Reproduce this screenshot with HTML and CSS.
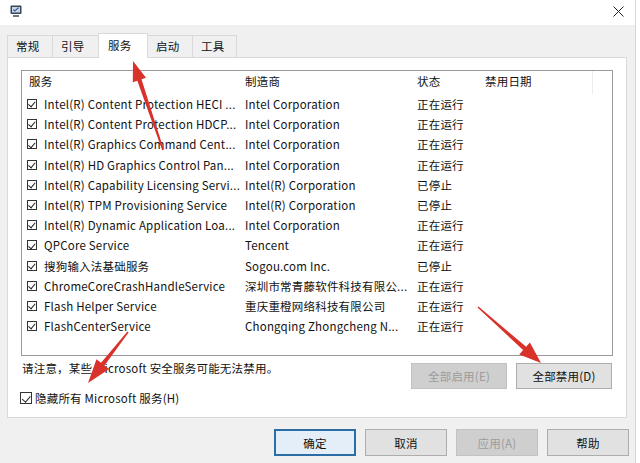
FILE: index.html
```html
<!DOCTYPE html>
<html lang="zh-CN">
<head>
<meta charset="utf-8">
<title>系统配置</title>
<link rel="stylesheet" href="styles.css">
</head>
<body>
<div class="win">
  <div class="titlebar">
    <svg class="appicon" width="12" height="13" viewBox="0 0 12 13">
      <rect x="0.5" y="0.5" width="11" height="8.5" rx="1" fill="#3a4656"/>
      <rect x="2" y="2" width="8" height="5.5" fill="#c9d6e6"/>
      <path d="M3.2 4.6 L4.8 6 L8.6 2.6" stroke="#2d5f9a" stroke-width="1.2" fill="none"/>
      <rect x="3" y="10" width="6" height="2" fill="#6b7786"/>
    </svg>
    <svg class="close" width="11" height="11" viewBox="0 0 11 11">
      <path d="M0.5 0.5 L10.5 10.5 M10.5 0.5 L0.5 10.5" stroke="#222" stroke-width="1"/>
    </svg>
  </div>
  <div class="client">
    <div class="tabs">
      <div class="tab t1">常规</div>
      <div class="tab t2">引导</div>
      <div class="tab t3 active">服务</div>
      <div class="tab t4">启动</div>
      <div class="tab t5">工具</div>
    </div>
    <div class="panel">
      <div class="list">
        <div class="lhead">
          <div class="hc hname">服务</div>
          <div class="hc">制造商</div>
          <div class="hc">状态</div>
          <div class="hc hdate">禁用日期</div>
        </div>
        <div class="row"><span class="cb"></span><span class="c">Intel(R) Content Protection HECI ...</span><span class="c">Intel Corporation</span><span class="c">正在运行</span><span></span></div>
        <div class="row"><span class="cb"></span><span class="c">Intel(R) Content Protection HDCP...</span><span class="c">Intel Corporation</span><span class="c">正在运行</span><span></span></div>
        <div class="row"><span class="cb"></span><span class="c">Intel(R) Graphics Command Cent...</span><span class="c">Intel Corporation</span><span class="c">正在运行</span><span></span></div>
        <div class="row"><span class="cb"></span><span class="c">Intel(R) HD Graphics Control Pan...</span><span class="c">Intel Corporation</span><span class="c">正在运行</span><span></span></div>
        <div class="row"><span class="cb"></span><span class="c">Intel(R) Capability Licensing Servi...</span><span class="c">Intel(R) Corporation</span><span class="c">已停止</span><span></span></div>
        <div class="row"><span class="cb"></span><span class="c">Intel(R) TPM Provisioning Service</span><span class="c">Intel(R) Corporation</span><span class="c">已停止</span><span></span></div>
        <div class="row"><span class="cb"></span><span class="c">Intel(R) Dynamic Application Loa...</span><span class="c">Intel Corporation</span><span class="c">正在运行</span><span></span></div>
        <div class="row"><span class="cb"></span><span class="c">QPCore Service</span><span class="c">Tencent</span><span class="c">正在运行</span><span></span></div>
        <div class="row"><span class="cb"></span><span class="c">搜狗输入法基础服务</span><span class="c">Sogou.com Inc.</span><span class="c">已停止</span><span></span></div>
        <div class="row"><span class="cb"></span><span class="c">ChromeCoreCrashHandleService</span><span class="c">深圳市常青藤软件科技有限公...</span><span class="c">正在运行</span><span></span></div>
        <div class="row"><span class="cb"></span><span class="c">Flash Helper Service</span><span class="c">重庆重橙网络科技有限公司</span><span class="c">正在运行</span><span></span></div>
        <div class="row"><span class="cb"></span><span class="c">FlashCenterService</span><span class="c">Chongqing Zhongcheng N...</span><span class="c">正在运行</span><span></span></div>
      </div>
      <div class="actions">
        <div class="note">请注意，某些 Microsoft 安全服务可能无法禁用。</div>
        <div class="btn wide disabled">全部启用(E)</div>
        <div class="btn wide">全部禁用(D)</div>
      </div>
      <div class="hide"><span class="cb big"></span><span>隐藏所有 Microsoft 服务(H)</span></div>
    </div>
    <div class="footer">
      <div class="btn default">确定</div>
      <div class="btn">取消</div>
      <div class="btn disabled">应用(A)</div>
      <div class="btn">帮助</div>
    </div>
  </div>
</div>
<svg class="arrows" width="640" height="463" viewBox="0 0 640 463">
  <polygon fill="#d9322a" points="133,61 146.0,77.8 141.5,79.3 163.8,149.7 162.2,150.3 137.3,80.7 132.8,82.2"/>
  <polygon fill="#d9322a" points="88,383 109.1,369.0 104.5,365.5 128.6,332.5 127.4,331.5 101.1,362.7 96.5,359.2"/>
  <polygon fill="#d9322a" points="541,363 529.9,342.4 526.1,346.8 478.5,306.4 477.5,307.6 523.1,350.0 519.3,354.4"/>
</svg>
</body>
</html>
```
FILE: styles.css
```css
html, body {
  margin: 0;
  padding: 0;
  background: #ffffff;
}
body {
  width: 640px;
  height: 463px;
  overflow: hidden;
  position: relative;
  font-family: "Noto Sans CJK SC", "Noto Sans", sans-serif;
  font-size: 11.5px;
  letter-spacing: 0.2px;
  color: #111;
}
.win {
  width: 635px;
  border-right: 1px solid #d6d6d6;
  height: 463px;
  display: flex;
  flex-direction: column;
}
.titlebar {
  height: 25px;
  background: #fff;
  display: flex;
  align-items: center;
  justify-content: space-between;
  padding: 0 11px 2px 10px;
  box-sizing: border-box;
}
.appicon { display: block; }
.close { display: block; }
.client {
  flex: 1;
  background: #f0f0f0;
  padding: 10px 0 0 7px;
}
.tabs {
  display: flex;
  align-items: flex-end;
  height: 22px;
}
.tab {
  height: 22px;
  box-sizing: border-box;
  border: 1px solid #d9d9d9;
  border-bottom: none;
  background: #f0f0f0;
  padding-left: 8px;
  line-height: 20px;
  margin-left: -1px;
}
.tab:first-child { margin-left: 0; }
.t1 { width: 46px; }
.t2 { width: 47px; }
.t3 { width: 50px; }
.t4 { width: 46px; }
.t5 { width: 45px; }
.tab.active {
  background: #fff;
  height: 25px;
  margin-bottom: -1px;
  position: relative;
  z-index: 1;
  padding-left: 9px;
  line-height: 22px;
}
.panel {
  width: 620px;
  height: 361px;
  box-sizing: border-box;
  background: #fff;
  border: 1px solid #d9d9d9;
  padding: 12px 14px 0 13px;
}
.list {
  width: 592px;
  height: 286px;
  box-sizing: border-box;
  border: 1px solid #9a9a9a;
  background: #fff;
}
.lhead {
  display: grid;
  grid-template-columns: 216px 172px 68px 108px;
  height: 23px;
  padding-left: 7px;
  line-height: 20px;
}
.hdate {
  border-right: 1px solid #ececec;
}
.row {
  display: grid;
  grid-template-columns: 17px 201px 172px 68px 1fr;
  height: 20.2px;
  line-height: 20.2px;
  padding-left: 5px;
  align-items: center;
}
.c {
  white-space: nowrap;
  overflow: hidden;
}
.cb {
  width: 10px;
  height: 10px;
  box-sizing: border-box;
  border: 1px solid #333;
  position: relative;
  display: inline-block;
  background: #fff;
}
.cb::after {
  content: "";
  position: absolute;
  left: 2.4px;
  top: 0.2px;
  width: 3px;
  height: 5.5px;
  border: solid #222;
  border-width: 0 1.2px 1.2px 0;
  transform: rotate(40deg);
}
.cb.big {
  width: 12px;
  height: 12px;
}
.cb.big::after {
  left: 3.2px;
  top: 0.6px;
  width: 3.5px;
  height: 6.5px;
}
.actions {
  display: flex;
  align-items: flex-start;
  margin-top: 7px;
  height: 26px;
}
.note {
  flex: 1;
  line-height: 14px;
  margin-top: -2px;
  margin-left: 1px;
}
.btn {
  width: 82px;
  height: 27px;
  box-sizing: border-box;
  border: 1px solid #adadad;
  background: #e1e1e1;
  display: flex;
  align-items: center;
  justify-content: center;
  color: #111;
}
.btn.wide {
  width: 96px;
  height: 26px;
  margin-left: 9px;
}
.btn.disabled {
  background: #cfcfcf;
  border-color: #c2c2c2;
  color: #9c9c9c;
}
.btn.default {
  background: #e3eef8;
  border: 2px solid #2b6ea6;
}
.hide {
  display: flex;
  align-items: center;
  gap: 3px;
  height: 12px;
  margin-top: 3px;
  margin-left: -1px;
}
.footer {
  display: flex;
  justify-content: flex-end;
  gap: 9px;
  padding: 11px 6px 0 0;
}
.arrows {
  position: absolute;
  left: 0;
  top: 0;
  pointer-events: none;
}
```
